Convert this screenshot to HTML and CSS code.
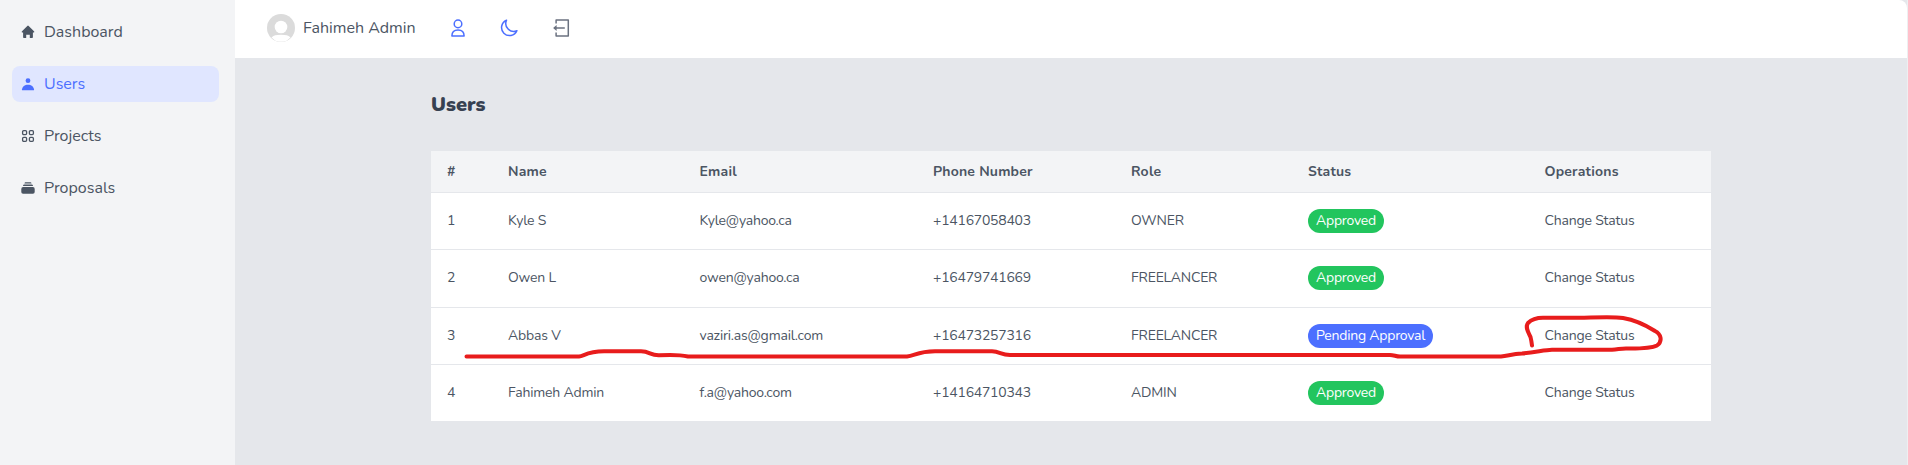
FILE: index.html
```html
<!DOCTYPE html>
<html lang="en">
<head>
<meta charset="utf-8">
<title>Users</title>
<link rel="stylesheet" href="styles.css">
</head>
<body>
<div class="app">
  <nav class="sidebar">
    <a class="nav-item"><svg class="nav-icon" viewBox="0 0 16 16" fill="currentColor"><path d="M7.300 1.900a1 1 0 0 1 1.400 0L14 7.200c.6.6.3 1.300-.4 1.300h-.7v4.600c0 .7-.4 1-1 1H9.800v-3.400H6.200v3.400H4.100c-.6 0-1-.3-1-1V8.500h-.7c-.7 0-1-.7-.4-1.300z"/></svg><span>Dashboard</span></a>
    <a class="nav-item active"><svg class="nav-icon" viewBox="0 0 16 16" fill="currentColor"><circle cx="8" cy="4.700" r="2.400"/><path d="M2.200 14.200c-.2 0-.3-.1-.3-.4C2.200 10.700 4.800 8.800 8 8.800s5.800 1.900 6.100 5c0 .3-.1.4-.3.4z"/></svg><span>Users</span></a>
    <a class="nav-item"><svg class="nav-icon" viewBox="0 0 16 16" fill="none" stroke="currentColor" stroke-width="1.300"><rect x="2.600" y="2.600" width="4" height="4" rx="1.100"/><rect x="9.400" y="2.600" width="4" height="4" rx="1.100"/><rect x="2.600" y="9.400" width="4" height="4" rx="1.100"/><rect x="9.400" y="9.400" width="4" height="4" rx="1.100"/></svg><span>Projects</span></a>
    <a class="nav-item"><svg class="nav-icon" viewBox="0 0 16 16" fill="currentColor"><path d="M4.500 3.500c0-1 .6-1.300 1.200-1.300h4.600c.6 0 1.200.3 1.200 1.300zM3 6c0-1 .6-1.500 1.300-1.500h7.400C12.400 4.500 13 5 13 6z"/><rect x="1.300" y="7.100" width="13.400" height="6.700" rx="1.800"/></svg><span>Proposals</span></a>
  </nav>
  <div class="main">
    <header class="topbar">
      <div class="profile">
        <svg class="avatar" viewBox="0 0 28 28"><defs><clipPath id="round"><circle cx="14" cy="14" r="14"/></clipPath></defs><g clip-path="url(#round)"><rect width="28" height="28" fill="#dbdbdb"/><circle cx="14" cy="13" r="6.300" fill="#fff"/><path d="M4.500 23.500c1.500-2 5-2.700 9.500-2.700s8 .7 9.500 2.700L19 27.200q-5 1-10 0z" fill="#fff"/></g></svg>
        <span>Fahimeh Admin</span>
      </div>
      <svg class="tool blue" viewBox="0 0 20 20"><circle cx="10" cy="5.900" r="3.800"/><path d="M3.900 18.100c0-4 2.700-6 6.100-6s6.100 2 6.100 6z"/></svg>
      <svg class="tool blue" viewBox="0 0 20 20"><path d="M7.500 2.200a8 8 0 1 0 10.400 10.600A8 8 0 0 1 7.500 2.200z"/></svg>
      <svg class="tool gray" viewBox="0 0 20 20"><path d="M5.100 5.500V2.100h12.200v15.800H5.100v-3.400M3.200 10h10.600"/><path class="head" d="M5.600 7 2.100 10l3.500 3z"/></svg>
    </header>
    <main class="content">
      <h1 class="title">Users</h1>
      <table class="users">
        <colgroup><col class="c-num"><col class="c-name"><col class="c-email"><col class="c-phone"><col class="c-role"><col class="c-status"><col class="c-ops"></colgroup>
        <thead><tr><th>#</th><th>Name</th><th>Email</th><th>Phone Number</th><th>Role</th><th>Status</th><th>Operations</th></tr></thead>
        <tbody>
          <tr><td>1</td><td>Kyle S</td><td>Kyle@yahoo.ca</td><td class="digits">+14167058403</td><td>OWNER</td><td><span class="badge approved">Approved</span></td><td>Change Status</td></tr>
          <tr class="tall"><td>2</td><td>Owen L</td><td>owen@yahoo.ca</td><td class="digits">+16479741669</td><td>FREELANCER</td><td><span class="badge approved">Approved</span></td><td>Change Status</td></tr>
          <tr><td>3</td><td>Abbas V</td><td>vaziri.as@gmail.com</td><td class="digits">+16473257316</td><td>FREELANCER</td><td><span class="badge pending">Pending Approval</span></td><td>Change Status</td></tr>
          <tr><td>4</td><td>Fahimeh Admin</td><td>f.a@yahoo.com</td><td class="digits">+14164710343</td><td>ADMIN</td><td><span class="badge approved">Approved</span></td><td>Change Status</td></tr>
        </tbody>
      </table>
    </main>
  </div>
</div>
<svg class="ink" viewBox="0 0 1908 465"><path d="M466.500 356.500H579C584 356 587 351.500 604 351.300H641C650 351.300 650 355.500 659 355.300C670 354.700 680 354.700 688 356.500H907C915 355.500 918 351.500 935 351.300H992C1000 351.500 1001 355 1010 355H1390C1394 355 1396 356.600 1400 356.600H1501C1508 356 1512 354 1522 353.500C1535 352.500 1545 349.700 1552 349.700H1612C1618 349.500 1620 348.500 1626 348.500C1640 348.700 1651 348.500 1657 345.500C1663 341 1661 334 1655 331C1644 324 1635 320 1623 318C1612 316.500 1590 317.800 1580 317.800H1543C1536 317.800 1531 320 1528 323C1525 327 1528 332 1530.500 337Q1531.500 341 1532 345.500"/></svg>
</body>
</html>
```
FILE: styles.css
```css
* { box-sizing: border-box; }
body {
  margin: 0;
  background: #e5e7eb;
  font-family: Nunito, Lato, "Open Sans", sans-serif;
  font-weight: 400;
  color: #4b5563;
}
.app { display: flex; height: 465px; overflow: hidden; }
.sidebar {
  width: 235px;
  padding: 14px 16px 14px 12px;
  background: #f3f4f6;
  display: flex;
  flex-direction: column;
  gap: 16px;
}
.nav-item {
  height: 36px;
  padding: 0 8px;
  display: flex;
  align-items: center;
  gap: 8px;
  border-radius: 8px;
  font-size: 16px;
  line-height: 24px;
}
.nav-icon { width: 16px; height: 16px; }
.active { background: #e0e6ff; color: #4c6fff; }
.main { flex: 1; border-right: 1px solid #eeeff1; }
.topbar {
  height: 58px;
  padding: 0 32px 2px;
  background: #fff;
  border-radius: 0 8px 0 0;
  display: flex;
  align-items: center;
}
.profile { display: flex; align-items: center; gap: 8px; width: 181px; font-size: 16px; }
.avatar { width: 28px; height: 28px; }
.tool { width: 20px; height: 20px; margin-right: 31.300px; fill: none; stroke-width: 1.500; stroke-linejoin: round; }
.blue { stroke: #4c6fff; }
.gray { stroke: #6b7280; }
.head { fill: #6b7280; stroke: none; }
.content { width: 1280px; margin: 0 195.500px 0 196px; padding-top: 33px; }
.title { margin: 0 0 32px; font-size: 20px; line-height: 28px; font-weight: 900; color: #374151; }
.users { width: 1280px; table-layout: fixed; border-collapse: separate; border-spacing: 0; background: #fff; font-size: 14px; line-height: 20px; }
.c-num { width: 61px; }
.c-name { width: 191.500px; }
.c-email { width: 233.500px; }
.c-phone { width: 198px; }
.c-role { width: 177px; }
.c-status { width: 236.500px; }
.c-ops { width: 182.500px; }
th, td { padding: 0 16px; text-align: left; white-space: nowrap; border-bottom: 1px solid #e5e7eb; }
th { height: 42px; background: #f3f4f6; font-weight: 700; letter-spacing: 0.200px; }
td { height: 57px; vertical-align: middle; letter-spacing: -0.190px; }
.digits { letter-spacing: -0.240px; }
.tall td { height: 58px; padding-bottom: 1px; }
tbody tr:last-child td { border-bottom: 0; height: 56px; }
.badge { display: inline-block; height: 24px; padding: 0 8px; line-height: 23px; border-radius: 12px; color: #fff; vertical-align: middle; letter-spacing: -0.230px; }
.approved { background: #22c55e; }
.pending { background: #4c6fff; }
.ink { position: absolute; left: 0; top: 0; width: 1908px; height: 465px; pointer-events: none; fill: none; stroke: #e81c1c; stroke-width: 4; stroke-linecap: round; stroke-linejoin: round; }
```
